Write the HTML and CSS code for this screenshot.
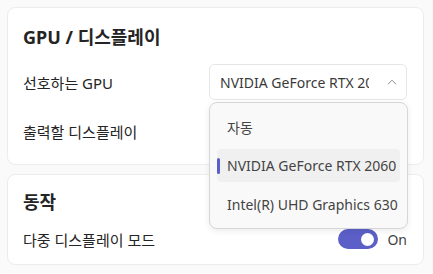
FILE: index.html
```html
<!DOCTYPE html>
<html lang="ko">
<head>
    <meta charset="UTF-8">
    <title>GPU / 디스플레이</title>
    <link rel="stylesheet" href="styles.css">
</head>
<body>
    <div class="card">
        <h2 class="card-title">GPU / 디스플레이</h2>
        <div class="row">
            <div class="label">선호하는 GPU</div>
            <div class="select-wrap">
                <div class="select">
                    <span class="select-value">NVIDIA GeForce RTX 2060</span>
                    <svg class="chevron" width="10" height="6" viewBox="0 0 10 6"><path d="M1 5.2 L5 1.2 L9 5.2" fill="none" stroke="#8a8a8a" stroke-width="1"/></svg>
                </div>
                <div class="dropdown">
                    <div class="option">자동</div>
                    <div class="option selected">NVIDIA GeForce RTX 2060</div>
                    <div class="option">Intel(R) UHD Graphics 630</div>
                </div>
            </div>
        </div>
        <div class="row">
            <div class="label">출력할 디스플레이</div>
            <div class="select"></div>
        </div>
    </div>
    <div class="card card-compact">
        <h2 class="card-title">동작</h2>
        <div class="row row-small">
            <div class="label">다중 디스플레이 모드</div>
            <div class="toggle-wrap">
                <div class="toggle"><div class="knob"></div></div>
                <span class="toggle-text">On</span>
            </div>
        </div>
    </div>
</body>
</html>
```

FILE: styles.css
```css
body {
    margin: 0;
    padding: 7px 9px 7px 7px;
    background-color: #fafafa;
    font-family: "Noto Sans", "Noto Sans CJK KR", sans-serif;
    font-size: 14px;
    color: #242424;
}
.card {
    background-color: #fff;
    border: 1px solid #ececec;
    border-radius: 8px;
    padding: 14px 16px 15px 15px;
    margin-bottom: 9px;
}
.card-compact {
    padding-top: 12px;
    padding-bottom: 13px;
}
.card-title {
    margin: 0 0 12px;
    font-size: 18px;
    font-weight: bold;
    line-height: 30px;
    color: #242424;
}
.card-compact .card-title {
    margin-bottom: 10px;
}
.row {
    display: flex;
    justify-content: space-between;
    align-items: center;
    height: 36px;
    margin-bottom: 13px;
}
.row:last-child {
    margin-bottom: 0;
}
.row-small {
    height: 24px;
}
.label {
    font-size: 15px;
    color: #242424;
}
.select-wrap {
    position: relative;
}
.select {
    width: 198px;
    height: 36px;
    box-sizing: border-box;
    border: 1px solid #e6e6e6;
    border-radius: 5px;
    background-color: #fff;
    display: flex;
    align-items: center;
    padding: 0 9px 0 10px;
}
.select-value {
    flex: 1;
    overflow: hidden;
    white-space: nowrap;
    color: #3a3a3a;
    margin-right: 18px;
}
.chevron {
    flex-shrink: 0;
}
.dropdown {
    position: absolute;
    top: 38px;
    left: 0;
    width: 199px;
    box-sizing: border-box;
    padding: 7px;
    background-color: #f9f9f9;
    border: 1px solid #d6d6d6;
    border-radius: 8px;
    box-shadow: 0 2px 6px rgba(0, 0, 0, 0.08);
    display: flex;
    flex-direction: column;
    gap: 6px;
    z-index: 2;
}
.option {
    height: 33px;
    display: flex;
    align-items: center;
    padding-left: 10px;
    border-radius: 4px;
    color: #444;
    position: relative;
}
.option.selected {
    background-color: #f0f0f0;
}
.option.selected::before {
    content: "";
    position: absolute;
    left: 0;
    top: 9px;
    width: 3px;
    height: 16px;
    border-radius: 2px;
    background-color: #5b5fc7;
}
.toggle-wrap {
    display: flex;
    align-items: center;
    gap: 9px;
}
.toggle {
    width: 40px;
    height: 20px;
    border-radius: 10px;
    background-color: #5b5fc7;
    display: flex;
    align-items: center;
    justify-content: flex-end;
    padding: 0 4px;
    box-sizing: border-box;
}
.knob {
    width: 13px;
    height: 13px;
    border-radius: 50%;
    background-color: #fff;
}
.toggle-text {
    color: #424242;
}
```
